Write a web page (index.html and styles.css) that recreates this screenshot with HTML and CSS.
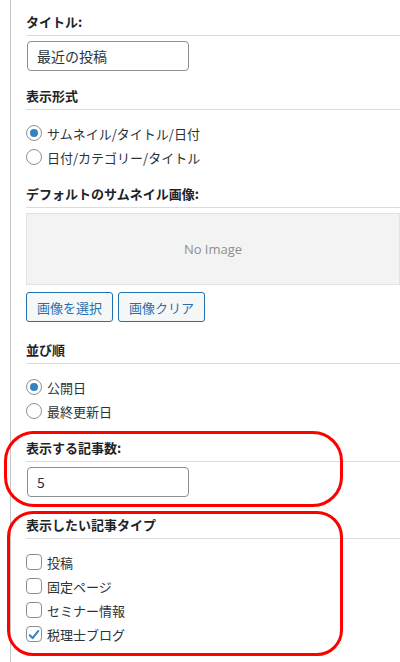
FILE: index.html
```html
<!DOCTYPE html>
<html>
    <head>
        <title>ウィジェット設定</title>
        <link rel="stylesheet" href="styles.css">
    </head>
    <body>
        <div class="widget">
            <div class="field">
                <h3 class="label">タイトル:</h3>
                <input type="text" class="text" value="最近の投稿">
            </div>

            <div class="field">
                <h3 class="label">表示形式</h3>
                <div class="choices">
                    <label class="choice"><span class="radio checked"></span>サムネイル/タイトル/日付</label>
                    <label class="choice"><span class="radio"></span>日付/カテゴリー/タイトル</label>
                </div>
            </div>

            <div class="field">
                <h3 class="label">デフォルトのサムネイル画像:</h3>
                <div class="noimage">No Image</div>
                <div class="buttons">
                    <button type="button" class="btn">画像を選択</button>
                    <button type="button" class="btn">画像クリア</button>
                </div>
            </div>

            <div class="field">
                <h3 class="label">並び順</h3>
                <div class="choices">
                    <label class="choice"><span class="radio checked"></span>公開日</label>
                    <label class="choice"><span class="radio"></span>最終更新日</label>
                </div>
            </div>

            <div class="field marked">
                <div class="mark mark-count"></div>
                <h3 class="label">表示する記事数:</h3>
                <input type="text" class="text" value="5">
            </div>

            <div class="field marked">
                <div class="mark mark-types"></div>
                <h3 class="label">表示したい記事タイプ</h3>
                <div class="choices">
                    <label class="choice"><span class="check"></span>投稿</label>
                    <label class="choice"><span class="check"></span>固定ページ</label>
                    <label class="choice"><span class="check"></span>セミナー情報</label>
                    <label class="choice"><span class="check checked">
                        <svg viewBox="0 0 16 16" width="16" height="16"><path d="M3.2 8.2 L6.4 11.6 L12.8 3.6" fill="none" stroke="#3582c4" stroke-width="2.4" stroke-linecap="round" stroke-linejoin="round"/></svg>
                    </span>税理士ブログ</label>
                </div>
            </div>
        </div>
    </body>
</html>
```

FILE: styles.css
```css
body{
    margin:0;
    padding:0;
    background-color:#fff;
    color:#1d2327;
    font-family:"Noto Sans CJK JP", sans-serif;
    font-size:13px;
    overflow:hidden;
}
.widget{
    margin-left:10px;
    padding:12px 0 3px 15px;
    border-left:1px solid #c3c4c7;
}
.field{
    margin-bottom:15px;
}
.field:last-child{
    margin-bottom:0;
}
.label{
    margin:0 0 5px;
    padding-bottom:3px;
    font-size:13px;
    font-weight:bold;
    line-height:20px;
    border-bottom:1px solid #dcdcde;
}
.text{
    display:block;
    box-sizing:border-box;
    width:162px;
    height:30px;
    margin:0 0 0 1px;
    padding:0 9px;
    font-family:"Noto Sans CJK JP", sans-serif;
    font-size:14px;
    color:#2c3338;
    border:1px solid #8c8f94;
    border-radius:4px;
    background:#fff;
}
.choices{
    padding-top:6px;
}
.choice{
    display:flex;
    align-items:center;
    gap:5px;
    height:24px;
    color:#2c3338;
}
.radio, .check{
    box-sizing:border-box;
    display:flex;
    align-items:center;
    justify-content:center;
    width:16px;
    height:16px;
    border:1px solid #8c8f94;
    background:#fff;
}
.radio{
    border-radius:50%;
}
.radio.checked::before{
    content:"";
    width:8px;
    height:8px;
    border-radius:50%;
    background:#3582c4;
}
.check{
    border-radius:4px;
}
.check svg{
    display:block;
    margin-top:1px;
}
.noimage{
    box-sizing:border-box;
    height:72px;
    line-height:70px;
    text-align:center;
    font-family:"Open Sans", sans-serif;
    font-size:13px;
    color:#8c8f94;
    background:#f3f3f3;
    border:1px solid #e2e2e2;
}
.buttons{
    display:flex;
    gap:5px;
    margin-top:7px;
    margin-bottom:18px;
}
.btn{
    height:30px;
    padding:0 10px;
    font-family:"Noto Sans CJK JP", sans-serif;
    font-size:13px;
    color:#2271b1;
    background:#f6f7f7;
    border:1px solid #2271b1;
    border-radius:3px;
}
.marked{
    position:relative;
}
.field.marked{
    margin-bottom:18px;
}
.mark{
    position:absolute;
    border:3px solid #f00;
    pointer-events:none;
}
.mark-count{
    top:-7px;
    bottom:-10px;
    left:-22px;
    width:333px;
    border-radius:30px;
}
.mark-types{
    top:-4px;
    bottom:-10px;
    left:-19px;
    width:330px;
    border-radius:26px;
}
```
